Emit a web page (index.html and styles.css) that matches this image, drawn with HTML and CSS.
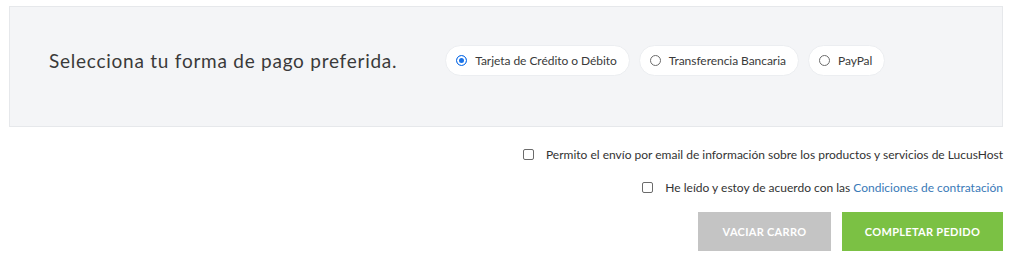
FILE: index.html
```html
<!DOCTYPE html>
<html lang="es">
<head>
<meta charset="utf-8">
<link rel="stylesheet" href="styles.css">
</head>
<body>
<div class="page">
  <section class="pay-box">
    <h2 class="pay-title">Selecciona tu forma de pago preferida.</h2>
    <div class="pay-options">
      <label class="pill"><span class="radio checked"></span>Tarjeta de Crédito o Débito</label>
      <label class="pill"><span class="radio"></span>Transferencia Bancaria</label>
      <label class="pill"><span class="radio"></span>PayPal</label>
    </div>
  </section>
  <div class="checks">
    <label class="check"><span class="box"></span>Permito el envío por email de información sobre los productos y servicios de LucusHost</label>
    <label class="check"><span class="box"></span>He leído y estoy de acuerdo con las&nbsp;<a class="link" href="#">Condiciones de contratación</a></label>
  </div>
  <div class="actions">
    <button class="btn btn-gray">VACIAR CARRO</button>
    <button class="btn btn-green">COMPLETAR PEDIDO</button>
  </div>
</div>
</body>
</html>
```
FILE: styles.css
```css
* { box-sizing: border-box; }
html, body { margin: 0; background: #fff; }
body { font-family: Lato, "Open Sans", sans-serif; color: #333; }
.page { padding: 6px 21px 0 9px; }
.pay-box {
  height: 121px;
  background: #f4f5f7;
  border: 1px solid #e6e8eb;
  display: flex;
  align-items: center;
  padding: 0 0 12px 39px;
}
.pay-title {
  margin: 0;
  font-weight: 400;
  font-size: 19px;
  letter-spacing: 0.75px;
  color: #3a3a3a;
  margin-right: 48px;
}
.pay-options { display: flex; gap: 9px; }
.pill {
  display: flex;
  align-items: center;
  height: 31px;
  padding: 0 12px 0 10px;
  background: #fff;
  border: 1px solid #eceef1;
  border-radius: 16px;
  font-size: 12px;
  letter-spacing: -0.05px;
  color: #3a3a3a;
  gap: 8px;
}
.radio {
  width: 11px; height: 11px;
  border: 1px solid #6b6b6b;
  border-radius: 50%;
  background: #fff;
}
.radio.checked {
  border: 1px solid #1a73e8;
  background: #1a73e8;
  box-shadow: inset 0 0 0 2px #fff;
}
.checks {
  display: flex;
  flex-direction: column;
  align-items: flex-end;
  margin-top: 20px;
  gap: 19px;
}
.check {
  display: flex;
  align-items: center;
  font-size: 12px;
  color: #333;
  height: 14px;
}
.box {
  width: 11px; height: 11px;
  border: 1px solid #6b6b6b;
  border-radius: 2px;
  margin-right: 12px;
}
.link { color: #3a7ab8; text-decoration: none; }
.actions {
  display: flex;
  justify-content: flex-end;
  gap: 11px;
  margin-top: 18px;
}
.btn {
  border: 0;
  height: 39px;
  font-family: Lato, sans-serif;
  font-weight: 700;
  font-size: 11px;
  letter-spacing: 0.3px;
  color: #fff;
}
.btn-gray { width: 133px; background: #c4c4c4; }
.btn-green { width: 161px; background: #7bc144; }
```
